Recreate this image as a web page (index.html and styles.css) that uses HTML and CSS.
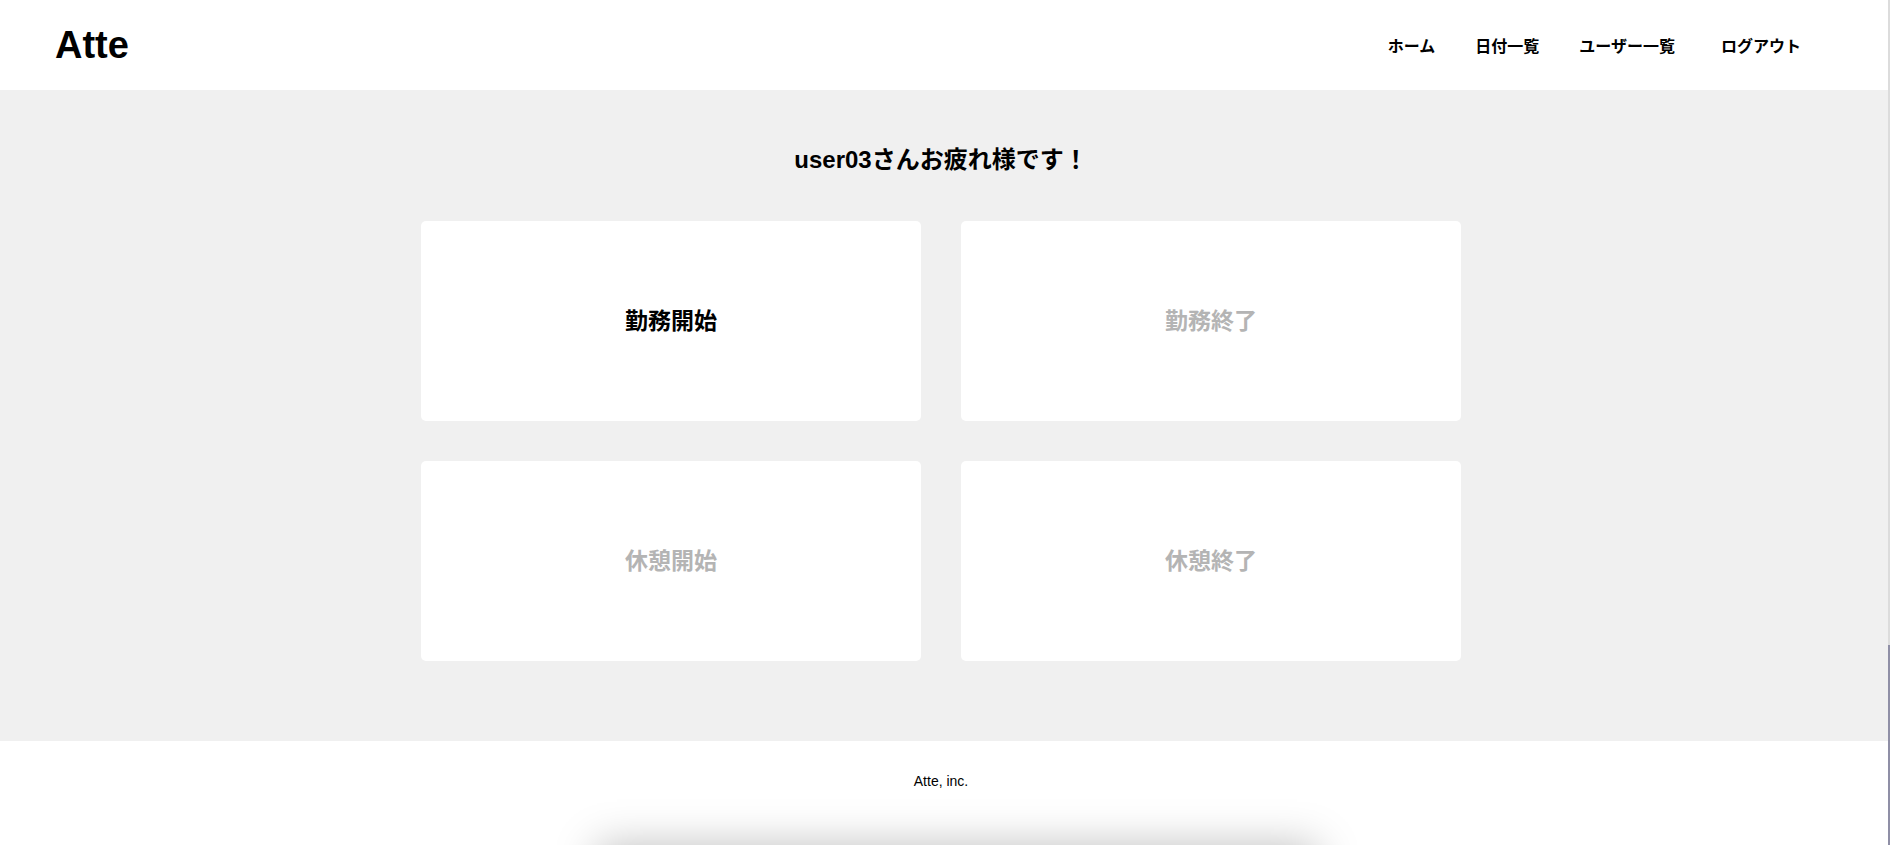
FILE: index.html
```
<!DOCTYPE html>
<html lang="ja">
<head>
  <meta charset="UTF-8">
  <meta name="viewport" content="width=device-width, initial-scale=1.0">
  <title>Atte</title>
  <link rel="stylesheet" href="styles.css">
</head>
<body>

<!-- Header -->
<header class="header">
  <div class="logo">Atte</div>
  <nav class="nav">
    <a href="#" class="nav-link">ホーム</a>
    <a href="#" class="nav-link">日付一覧</a>
    <a href="#" class="nav-link">ユーザー一覧</a>
    <form class="logout-form">
      <button type="button" class="logout-button">ログアウト</button>
    </form>
  </nav>
</header>

<!-- Stamp area -->
<main class="main">
  <h2 class="greeting">user03さんお疲れ様です！</h2>
  <div class="stamp-grid">
    <button class="stamp-card">勤務開始</button>
    <button class="stamp-card" disabled>勤務終了</button>
    <button class="stamp-card" disabled>休憩開始</button>
    <button class="stamp-card" disabled>休憩終了</button>
  </div>
</main>

<footer class="footer">
  <small class="copyright">Atte, inc.</small>
</footer>

<div class="below-fold"></div>
<div class="window-edge"></div>

</body>
</html>
```

FILE: styles.css
```
body {
  margin: 0;
  font-family: "Liberation Sans", "Noto Sans CJK JP", sans-serif;
  color: #000;
  background-color: #fff;
}

/* Header */
.header {
  height: 90px;
  padding: 0 89px 0 55px;
  display: flex;
  justify-content: space-between;
  align-items: center;
  background-color: #fff;
}

.logo {
  font-size: 38px;
  font-weight: bold;
}

.nav {
  display: flex;
  align-items: center;
  gap: 40px;
}

.nav-link {
  color: #000;
  text-decoration: none;
  font-size: 16px;
  font-weight: bold;
}

.logout-form {
  margin: 0 0 0 6px;
}

.logout-button {
  background: none;
  border: none;
  padding: 0;
  font-family: inherit;
  font-size: 16px;
  font-weight: bold;
  color: #000;
  cursor: pointer;
}

/* Main */
.main {
  background-color: #f0f0f0;
  padding: 54px 8px 80px 0;
}

.greeting {
  margin: 0 0 45px;
  font-size: 24px;
  line-height: 32px;
  font-weight: bold;
  text-align: center;
}

.stamp-grid {
  width: 1040px;
  margin: 0 auto;
  display: grid;
  grid-template-columns: 500px 500px;
  grid-auto-rows: 200px;
  gap: 40px;
}

.stamp-card {
  background-color: #fff;
  border: none;
  border-radius: 5px;
  padding: 0 0 4px;
  font-family: inherit;
  font-size: 23px;
  font-weight: bold;
  color: #000;
  cursor: pointer;
}

.stamp-card:disabled {
  color: #b4b4b4;
  cursor: default;
}

/* Footer */
.footer {
  padding: 30px 8px 54px 0;
  text-align: center;
  background-color: #fff;
}

.copyright {
  display: block;
  font-size: 14px;
  line-height: 20px;
}

/* shadow from the block just under the fold */
.below-fold {
  width: 720px;
  height: 200px;
  margin: 0 auto;
  position: relative;
  left: 12px;
  background-color: #fff;
  box-shadow: 0 0 40px rgba(0, 0, 0, 0.25);
}

.window-edge {
  position: fixed;
  top: 0;
  right: 0;
  width: 2px;
  height: 100%;
  background: linear-gradient(to bottom, #dcdcdc 0, #dcdcdc 645px, #8f8fa6 645px);
}
```
